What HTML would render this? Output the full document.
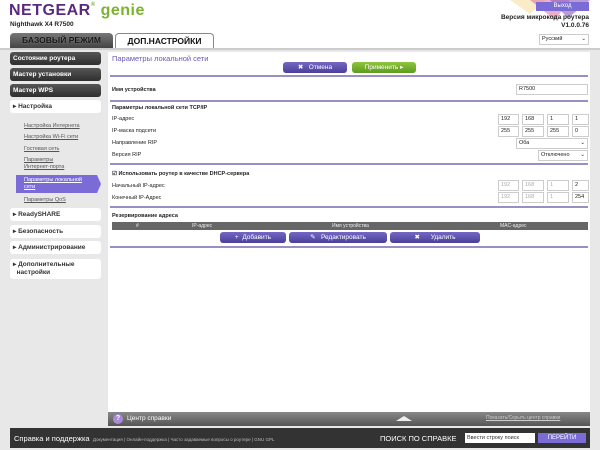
<!DOCTYPE html><html><head><meta charset="utf-8"><style>
*{margin:0;padding:0;box-sizing:border-box}
body{width:600px;height:450px;position:relative;overflow:hidden;background:#e8e8e8;font-family:"Liberation Sans",sans-serif;font-size:6px;color:#222}
.a{position:absolute}
.hdr{left:0;top:0;width:600px;height:48px;background:#fff}
.logo{left:9px;top:2px;font-size:16px;font-weight:bold;color:#5a2a82;letter-spacing:0.5px}
.logo span{color:#7bb32e;font-weight:bold}
.tab{top:33px;height:15px;font-size:8.5px;font-weight:bold;text-align:center;line-height:15px;border-radius:4px 4px 0 0}
.side{left:10px;width:91px;height:13px;border-radius:3px;background:linear-gradient(#555,#2e2e2e);color:#fff;font-weight:bold;font-size:6.5px;padding-left:3px;line-height:13px}
.sl{left:10px;width:91px;background:#fff;border-radius:3px;font-weight:bold;font-size:6.5px;color:#333;padding-left:3px;line-height:13px}
.sub{left:24px;color:#555;text-decoration:underline;font-size:5.5px}
.lbl{left:112px;font-size:5.5px}
.hr{left:110px;width:478px;height:2px;background:#9a8fc0}
.in{height:11px;border:1px solid #ccc;background:#fff;font-size:5.5px;padding-left:2px;line-height:9px}
.btn{height:11px;border-radius:3px;color:#fff;font-size:6.5px;line-height:11px;text-align:center;background:linear-gradient(#7468c4,#4a3f99)}
</style></head><body>
<div class="a hdr"></div>
<svg class="a" style="left:450px;top:0" width="150" height="24"><polygon points="60,0 95,0 80,14" fill="#f5e0a0" opacity=".6"/><polygon points="80,0 120,0 105,20" fill="#e07aa6" opacity=".6"/><polygon points="100,0 140,0 118,18" fill="#8a5ab8" opacity=".6"/></svg>
<div class="a logo">NETGEAR<span style="font-size:6px;vertical-align:top">®</span> <span>genie</span></div>
<div class="a" style="left:10px;top:21px;font-size:6.5px;font-weight:bold">Nighthawk X4 R7500</div>
<div class="a" style="left:536px;top:2px;width:53px;height:9px;background:#7a6bd6;color:#fff;font-size:6px;text-align:center;line-height:9px">Выход</div>
<div class="a" style="right:11px;top:14px;font-size:6.5px;font-weight:bold;text-align:right;line-height:8px">Версия микрокода роутера<br>V1.0.0.76</div>
<div class="a in" style="left:539px;top:34px;width:50px;height:11px">Русский <span style="float:right;margin-right:2px">⌄</span></div>
<div class="a tab" style="left:10px;width:103px;background:linear-gradient(#777,#444);color:#111;text-shadow:0 0 1px #aaa">БАЗОВЫЙ РЕЖИМ</div>
<div class="a tab" style="left:115px;width:99px;background:#fff;border:1px solid #888;border-bottom:none;color:#111">ДОП.НАСТРОЙКИ</div>
<div class="a" style="left:0;top:48px;width:600px;height:2px;background:#ccc"></div>

<div class="a side" style="top:52px">Состояние роутера</div>
<div class="a side" style="top:68px">Мастер установки</div>
<div class="a side" style="top:84px">Мастер WPS</div>
<div class="a sl" style="top:100px">▸ Настройка</div>
<div class="a sub" style="top:123px">Настройка Интернета</div>
<div class="a sub" style="top:134px">Настройка Wi-Fi сети</div>
<div class="a sub" style="top:146px">Гостевая сеть</div>
<div class="a sub" style="top:157px;line-height:7px">Параметры<br>Интернет-порта</div>
<div class="a" style="left:16px;top:175px;width:81px;height:18px;background:#7a6bd6"></div>
<div class="a" style="left:97px;top:175px;width:0;height:0;border-top:9px solid transparent;border-bottom:9px solid transparent;border-left:4px solid #7a6bd6"></div>
<div class="a sub" style="top:177px;color:#fff;line-height:7px">Параметры локальной<br>сети</div>
<div class="a sub" style="top:197px">Параметры QoS</div>
<div class="a sl" style="top:208px">▸ ReadySHARE</div>
<div class="a sl" style="top:225px">▸ Безопасность</div>
<div class="a sl" style="top:241px">▸ Администрирование</div>
<div class="a sl" style="top:259px;height:20px;line-height:8px;padding-top:2px">▸ Дополнительные<br>&nbsp;&nbsp;настройки</div>

<div class="a" style="left:108px;top:52px;width:482px;height:360px;background:#fff"></div>
<div class="a" style="left:112px;top:54px;font-size:7.5px;color:#6a5ab8">Параметры локальной сети</div>
<div class="a btn" style="left:283px;top:62px;width:64px">✖ &nbsp;&nbsp;Отмена</div>
<div class="a btn" style="left:352px;top:62px;width:64px;background:linear-gradient(#8fc63f,#5e9a1e)">Применить ▸</div>
<div class="a hr" style="top:75px"></div>
<div class="a lbl" style="top:87px;font-weight:bold">Имя устройства</div>
<div class="a in" style="left:516px;top:84px;width:72px">R7500</div>
<div class="a hr" style="top:100px"></div>
<div class="a lbl" style="top:105px;font-weight:bold">Параметры локальной сети TCP/IP</div>
<div class="a lbl" style="top:116px">IP-адрес</div>
<div class="a lbl" style="top:128px">IP-маска подсети</div>
<div class="a lbl" style="top:140px">Направление RIP</div>
<div class="a lbl" style="top:152px">Версия RIP</div>
<div class="a in" style="left:498px;top:114px;width:21px">192</div><div class="a in" style="left:522px;top:114px;width:22px">168</div><div class="a in" style="left:547px;top:114px;width:22px">1</div><div class="a in" style="left:572px;top:114px;width:17px">1</div>
<div class="a in" style="left:498px;top:126px;width:21px">255</div><div class="a in" style="left:522px;top:126px;width:22px">255</div><div class="a in" style="left:547px;top:126px;width:22px">255</div><div class="a in" style="left:572px;top:126px;width:17px">0</div>
<div class="a in" style="left:516px;top:138px;width:72px">Оба<span style="float:right;margin-right:2px">⌄</span></div>
<div class="a in" style="left:538px;top:150px;width:50px">Отключено <span style="float:right;margin-right:2px">⌄</span></div>
<div class="a hr" style="top:163px"></div>
<div class="a lbl" style="top:171px;font-weight:bold">☑ Использовать роутер в качестве DHCP-сервера</div>
<div class="a lbl" style="top:183px">Начальный IP-адрес</div>
<div class="a lbl" style="top:195px">Конечный IP-Адрес</div>
<div class="a in" style="left:498px;top:180px;width:21px;color:#aaa">192</div><div class="a in" style="left:522px;top:180px;width:22px;color:#aaa">168</div><div class="a in" style="left:547px;top:180px;width:22px;color:#aaa">1</div><div class="a in" style="left:572px;top:180px;width:17px">2</div>
<div class="a in" style="left:498px;top:192px;width:21px;color:#aaa">192</div><div class="a in" style="left:522px;top:192px;width:22px;color:#aaa">168</div><div class="a in" style="left:547px;top:192px;width:22px;color:#aaa">1</div><div class="a in" style="left:572px;top:192px;width:17px">254</div>
<div class="a hr" style="top:206px"></div>
<div class="a lbl" style="top:213px;font-weight:bold">Резервирование адреса</div>
<div class="a" style="left:112px;top:222px;width:476px;height:8px;background:#666;color:#eee;font-size:5px;line-height:8px">
<span class="a" style="left:24px">#</span><span class="a" style="left:80px">IP-адрес</span><span class="a" style="left:220px">Имя устройства</span><span class="a" style="left:388px">MAC-адрес</span></div>
<div class="a btn" style="left:220px;top:232px;width:66px">+ &nbsp;Добавить</div>
<div class="a btn" style="left:289px;top:232px;width:98px">✎ &nbsp;&nbsp;Редактировать</div>
<div class="a btn" style="left:390px;top:232px;width:90px">✖ &nbsp;&nbsp;&nbsp;&nbsp;&nbsp;Удалить</div>
<div class="a hr" style="top:246px"></div>

<div class="a" style="left:108px;top:412px;width:482px;height:14px;background:linear-gradient(#888,#555)"></div>
<div class="a" style="left:113px;top:414px;width:10px;height:10px;border-radius:50%;background:#a88ad6;color:#fff;font-size:7px;text-align:center;line-height:10px;font-weight:bold">?</div>
<div class="a" style="left:127px;top:415px;color:#fff;font-size:6.5px">Центр справки</div>
<div class="a" style="left:396px;top:416px;width:0;height:0;border-left:8px solid transparent;border-right:8px solid transparent;border-bottom:5px solid #eee"></div>
<div class="a" style="left:486px;top:415px;color:#ccc;font-size:5px;text-decoration:underline">Показать/Скрыть центр справки</div>

<div class="a" style="left:10px;top:428px;width:580px;height:20px;background:#333"></div>
<div class="a" style="left:14px;top:434px;color:#fff;font-size:7.5px">Справка и поддержка <span style="font-size:4.5px;color:#bbb">&nbsp;Документация | Онлайн-поддержка | Часто задаваемые вопросы о роутере | GNU GPL</span></div>
<div class="a" style="left:380px;top:434px;color:#fff;font-size:7.5px">ПОИСК ПО СПРАВКЕ</div>
<div class="a" style="left:465px;top:433px;width:70px;height:10px;background:#fff;color:#333;font-size:5.5px;line-height:10px;padding-left:2px">Ввести строку поиск</div>
<div class="a" style="left:538px;top:433px;width:48px;height:10px;background:#7a6bd6;color:#fff;font-size:6px;text-align:center;line-height:10px">ПЕРЕЙТИ</div>
</body></html>
